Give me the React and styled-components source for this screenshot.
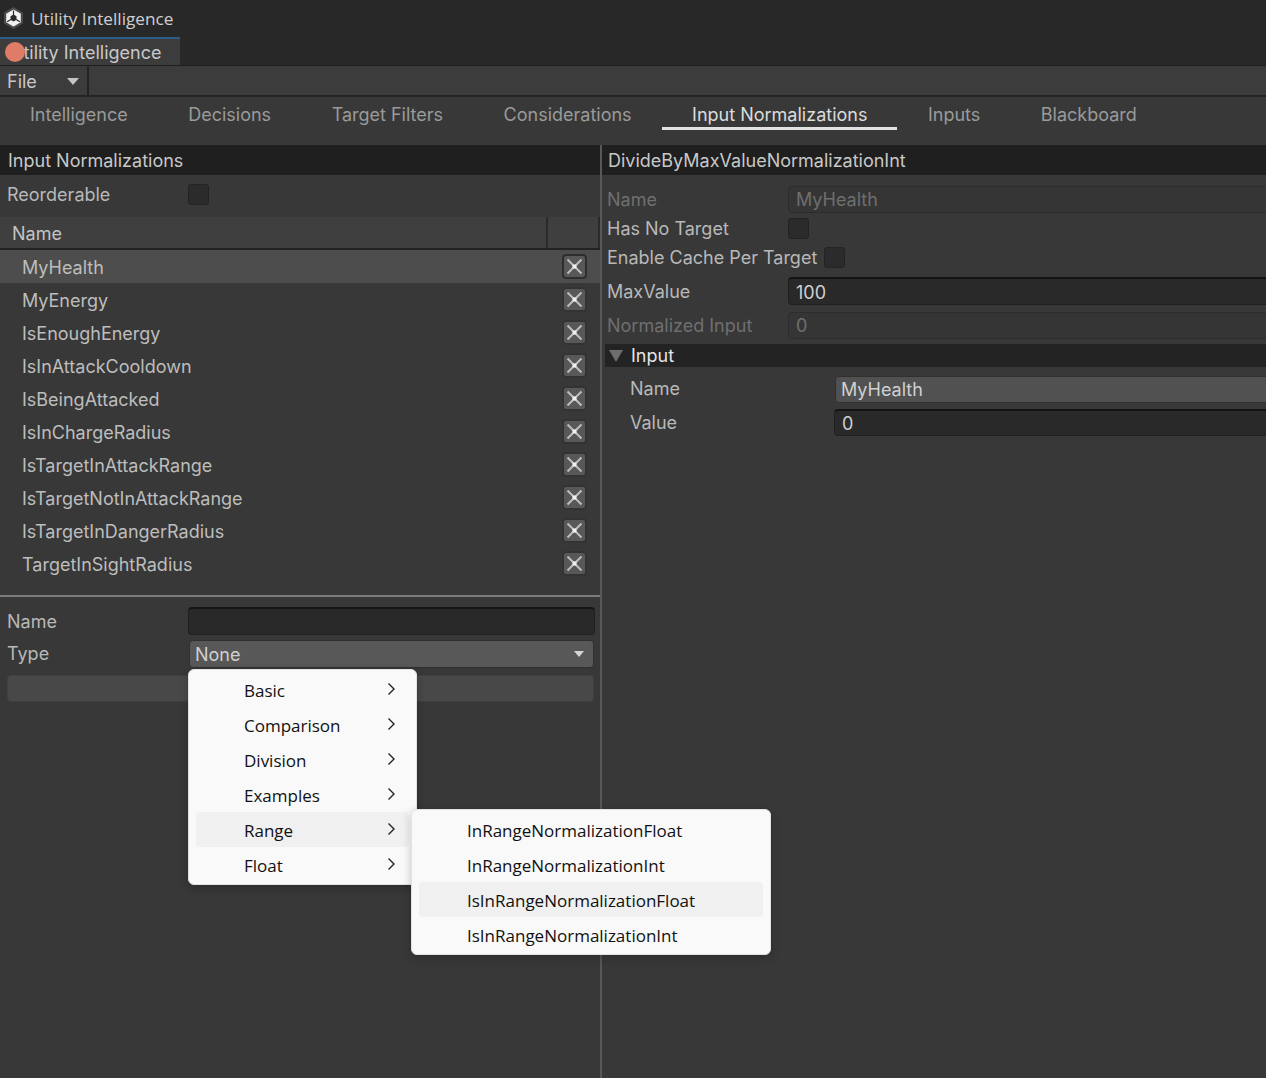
import React from 'react';
import styled, { createGlobalStyle } from 'styled-components';

const GlobalStyle = createGlobalStyle`
    html, body {
        margin: 0;
        padding: 0;
        background: #383838;
    }
    * {
        box-sizing: border-box;
    }
`;

const Page = styled.div`
    position: relative;
    width: 1266px;
    height: 1078px;
    overflow: hidden;
    display: flex;
    flex-direction: column;
    background: #383838;
    color: #c4c4c4;
    font-family: Inter, "Liberation Sans", sans-serif;
    font-size: 18px;
`;

const TitleBar = styled.div`
    height: 37px;
    flex: none;
    display: flex;
    align-items: center;
    gap: 7px;
    padding: 0 0 1px 3px;
    background: #282828;
    color: #cfcfcf;
    font-family: "Open Sans", "Noto Sans", sans-serif;
    font-size: 17.2px;
    svg {
        flex: none;
    }
`;

const DockRow = styled.div`
    height: 29px;
    flex: none;
    display: flex;
    background: #282828;
    border-bottom: 1px solid #1e1e1e;
`;

const DockTab = styled.div`
    width: 180px;
    height: 28px;
    padding-left: 10px;
    overflow: hidden;
    white-space: nowrap;
    background: #3c3c3c;
    border-top: 2px solid #2c5d87;
    color: #c8c8c8;
    font-size: 18px;
    line-height: 27px;
`;

const Dot = styled.span`
    position: absolute;
    left: 5px;
    top: 42px;
    width: 20px;
    height: 20px;
    border-radius: 50%;
    background: #df7c68;
`;

const Toolbar = styled.div`
    height: 31px;
    flex: none;
    display: flex;
    background: #3c3c3c;
    border-bottom: 2px solid #232323;
`;

const FileMenu = styled.div`
    width: 89px;
    display: flex;
    align-items: center;
    justify-content: space-between;
    padding: 2px 8px 0 7px;
    border-right: 2px solid #232323;
    color: #c8c8c8;
    &::after {
        content: '';
        border-left: 6px solid transparent;
        border-right: 6px solid transparent;
        border-top: 7px solid #c4c4c4;
    }
`;

const TabBar = styled.div`
    height: 48px;
    flex: none;
    display: flex;
    padding-top: 2px;
    background: #383838;
`;

const Tab = styled.div`
    height: 31px;
    padding: 5px 30px 0 30px;
    margin-right: 0.5px;
    white-space: nowrap;
    color: ${p => (p.$active ? '#dcdcdc' : '#9a9a9a')};
    border-bottom: 3px solid ${p => (p.$active ? '#e2e2e2' : 'transparent')};
`;

const Split = styled.div`
    flex: 1;
    display: flex;
    min-height: 0;
`;

const LeftPane = styled.div`
    width: 600px;
    flex: none;
    display: flex;
    flex-direction: column;
`;

const RightPane = styled.div`
    flex: 1;
    min-width: 0;
    border-left: 2px solid #585858;
    display: flex;
    flex-direction: column;
`;

const PaneTitle = styled.div`
    height: 30px;
    flex: none;
    padding-left: ${p => p.$indent}px;
    background: #1f1f1f;
    color: #c8c8c8;
    line-height: 31px;
    white-space: nowrap;
`;

const ReorderRow = styled.div`
    height: 42px;
    flex: none;
    display: flex;
    align-items: center;
    padding: 0 0 4px 7px;
`;

const Label = styled.span`
    width: ${p => p.$width || 181}px;
    flex: none;
    padding-bottom: ${p => p.$lift || 0}px;
    white-space: nowrap;
    color: ${p => (p.$dim ? '#6f6f6f' : '#b8b8b8')};
`;

const NestedLabel = styled(Label)`
    padding-left: 23px;
`;

const CheckBox = styled.span`
    width: 21px;
    height: 21px;
    flex: none;
    border-radius: 3px;
    background: #2b2b2b;
    border: 1px solid #232323;
`;

const TableHead = styled.div`
    height: 33px;
    flex: none;
    display: flex;
    background: #3f3f3f;
    border-bottom: 2px solid #232323;
`;

const HeadCell = styled.div`
    flex: ${p => (p.$grow ? 1 : 'none')};
    width: ${p => (p.$grow ? 'auto' : '52px')};
    padding-left: 12px;
    line-height: 33px;
    color: #c4c4c4;
    border-right: 2px solid #2a2a2a;
`;

const ListRow = styled.div`
    height: 33px;
    flex: none;
    display: flex;
    align-items: center;
    justify-content: space-between;
    padding: 0 13px 0 22px;
    background: ${p => (p.$selected ? '#4d4d4d' : 'transparent')};
    color: #bdbdbd;
`;

const RowName = styled.span`
    padding-top: 1px;
`;

const RemoveButton = styled.span`
    width: 25px;
    height: 25px;
    flex: none;
    display: flex;
    align-items: center;
    justify-content: center;
    border-radius: 4px;
    background: #585858;
    border: 2px solid ${p => (p.$selected ? '#2e2e2e' : '#333333')};
`;

const CreateForm = styled.div`
    margin-top: 15px;
    flex: 1;
    border-top: 2px solid #7a7a7a;
    padding: 10px 5px 0 7px;
    display: flex;
    flex-direction: column;
`;

const FormRow = styled.div`
    height: ${p => p.$h}px;
    flex: none;
    margin-bottom: ${p => p.$mb || 0}px;
    display: flex;
    align-items: center;
`;

const Field = styled.div`
    flex: 1;
    min-width: 0;
    height: ${p => p.$h || 28}px;
    margin-right: ${p => (p.$bleed ? '-10px' : 0)};
    padding-left: 7px;
    border-radius: 4px;
    line-height: ${p => (p.$h || 28) - 1}px;
    background: #292929;
    border: 1px solid #202020;
    border-top: 2px solid #141414;
    color: #d0d0d0;
`;

const MutedField = styled(Field)`
    background: #353535;
    border: 1px solid #2d2d2d;
    color: #6f6f6f;
`;

const NameField = styled(Field)`
    padding-left: 5px;
    background: #515151;
    border: 1px solid #303030;
    color: #d0d0d0;
`;

const SelectField = styled(Field)`
    display: flex;
    align-items: center;
    justify-content: space-between;
    margin: 0 1px;
    padding: 0 9px 0 5px;
    background: #585858;
    border: 1px solid #303030;
    &::after {
        content: '';
        border-left: 5.5px solid transparent;
        border-right: 5.5px solid transparent;
        border-top: 6px solid #d6d6d6;
    }
`;

const WideButton = styled.div`
    height: 27px;
    flex: none;
    margin-right: 1px;
    border-radius: 4px;
    background: #484848;
    border: 1px solid #404040;
`;

const Inspector = styled.div`
    padding: 10px 0 0 5px;
    display: flex;
    flex-direction: column;
`;

const InspectorRow = styled.div`
    height: ${p => p.$h}px;
    flex: none;
    margin-bottom: ${p => p.$mb || 0}px;
    display: flex;
    align-items: center;
`;

const Foldout = styled.div`
    height: 23px;
    margin: 5px 0 9px -2px;
    flex: none;
    display: flex;
    align-items: center;
    gap: 8px;
    padding-left: 4px;
    background: #232323;
    color: #e4e4e4;
    &::before {
        content: '';
        border-left: 7px solid transparent;
        border-right: 7px solid transparent;
        border-top: 12px solid #6e6e6e;
    }
`;

const Menu = styled.div`
    position: absolute;
    left: ${p => p.$left}px;
    top: ${p => p.$top}px;
    width: ${p => p.$width}px;
    padding: 2px 7px;
    border-radius: 6px;
    background: #f9f9f9;
    border: 1px solid #e2e2e2;
    box-shadow: 0 3px 10px rgba(0, 0, 0, 0.22);
    color: #111;
    font-family: "Open Sans", "Noto Sans", sans-serif;
    font-size: 17px;
    z-index: ${p => p.$z || 1};
`;

const MenuItem = styled.div`
    height: 35px;
    display: flex;
    align-items: center;
    justify-content: space-between;
    padding: 2px 13px 0 48px;
    border-radius: 4px;
    white-space: nowrap;
    background: ${p => (p.$hover ? '#f0f0f0' : 'transparent')};
`;

const Close = () => (
    <svg width="17" height="17" viewBox="0 0 17 17">
        <path d="M1.5 1.5 L15.5 15.5 M15.5 1.5 L1.5 15.5" stroke="#bdbdbd" strokeWidth="2" fill="none" />
        <rect x="6.5" y="6.5" width="4" height="4" fill="#f0f0f0" />
    </svg>
);

const Chevron = () => (
    <svg width="9" height="14" viewBox="0 0 9 14" style={{ marginTop: -4 }}>
        <path d="M1.5 1.5 L7 7 L1.5 12.5" stroke="#222" strokeWidth="1.4" fill="none" />
    </svg>
);

const UnityLogo = () => (
    <svg width="21" height="22" viewBox="0 0 21 22">
        <path d="M10.5 0 L20 5.5 L20 16.5 L10.5 22 L1 16.5 L1 5.5 Z" fill="#4b4b4b" />
        <path d="M10.5 2.5 L17.8 6.7 L17.8 15.3 L10.5 19.5 L3.2 15.3 L3.2 6.7 Z" fill="#f2f2f2" />
        <path d="M10.5 7.5 L13.5 9.2 L13.5 12.8 L10.5 14.5 L7.5 12.8 L7.5 9.2 Z" fill="#2a2a2a" />
        <path d="M10.5 8 V3.5 M13.2 12.6 L16.8 14.7 M7.8 12.6 L4.2 14.7" stroke="#2a2a2a" strokeWidth="1.2" />
    </svg>
);

const tabs = ['Intelligence', 'Decisions', 'Target Filters', 'Considerations', 'Input Normalizations', 'Inputs', 'Blackboard'];

const normalizations = [
    'MyHealth',
    'MyEnergy',
    'IsEnoughEnergy',
    'IsInAttackCooldown',
    'IsBeingAttacked',
    'IsInChargeRadius',
    'IsTargetInAttackRange',
    'IsTargetNotInAttackRange',
    'IsTargetInDangerRadius',
    'TargetInSightRadius'
];

const categories = ['Basic', 'Comparison', 'Division', 'Examples', 'Range', 'Float'];

const rangeTypes = [
    'InRangeNormalizationFloat',
    'InRangeNormalizationInt',
    'IsInRangeNormalizationFloat',
    'IsInRangeNormalizationInt'
];

export default function App() {
    return (
        <Page>
            <GlobalStyle />
            <TitleBar>
                <UnityLogo />
                Utility Intelligence
            </TitleBar>
            <DockRow>
                <DockTab>Utility Intelligence</DockTab>
            </DockRow>
            <Dot />
            <Toolbar>
                <FileMenu>File</FileMenu>
            </Toolbar>
            <TabBar>
                {tabs.map(t => (
                    <Tab key={t} $active={t === 'Input Normalizations'}>{t}</Tab>
                ))}
            </TabBar>
            <Split>
                <LeftPane>
                    <PaneTitle $indent={8}>Input Normalizations</PaneTitle>
                    <ReorderRow>
                        <Label>Reorderable</Label>
                        <CheckBox />
                    </ReorderRow>
                    <TableHead>
                        <HeadCell $grow>Name</HeadCell>
                        <HeadCell />
                    </TableHead>
                    {normalizations.map((n, i) => (
                        <ListRow key={n} $selected={i === 0}>
                            <RowName>{n}</RowName>
                            <RemoveButton $selected={i === 0}><Close /></RemoveButton>
                        </ListRow>
                    ))}
                    <CreateForm>
                        <FormRow $h={28} $mb={5}>
                            <Label>Name</Label>
                            <Field />
                        </FormRow>
                        <FormRow $h={28} $mb={7}>
                            <Label $lift={2}>Type</Label>
                            <SelectField>None</SelectField>
                        </FormRow>
                        <WideButton />
                    </CreateForm>
                </LeftPane>
                <RightPane>
                    <PaneTitle $indent={6}>DivideByMaxValueNormalizationInt</PaneTitle>
                    <Inspector>
                        <InspectorRow $h={28} $mb={1}>
                            <Label $dim>Name</Label>
                            <MutedField $h={27} $bleed>MyHealth</MutedField>
                        </InspectorRow>
                        <InspectorRow $h={29}>
                            <Label>Has No Target</Label>
                            <CheckBox />
                        </InspectorRow>
                        <InspectorRow $h={29} $mb={5}>
                            <Label $width={217}>Enable Cache Per Target</Label>
                            <CheckBox />
                        </InspectorRow>
                        <InspectorRow $h={28} $mb={6}>
                            <Label>MaxValue</Label>
                            <Field $bleed>100</Field>
                        </InspectorRow>
                        <InspectorRow $h={28}>
                            <Label $dim>Normalized Input</Label>
                            <MutedField $h={27} $bleed>0</MutedField>
                        </InspectorRow>
                        <Foldout>Input</Foldout>
                        <InspectorRow $h={27} $mb={6}>
                            <NestedLabel $width={228} $lift={2}>Name</NestedLabel>
                            <NameField $h={27} $bleed>MyHealth</NameField>
                        </InspectorRow>
                        <InspectorRow $h={27}>
                            <NestedLabel $width={227}>Value</NestedLabel>
                            <Field $h={27} $bleed>0</Field>
                        </InspectorRow>
                    </Inspector>
                </RightPane>
            </Split>
            <Menu $left={188} $top={669} $width={229}>
                {categories.map(c => (
                    <MenuItem key={c} $hover={c === 'Range'}>
                        {c}
                        <Chevron />
                    </MenuItem>
                ))}
            </Menu>
            <Menu $left={411} $top={809} $width={360} $z={2}>
                {rangeTypes.map((r, i) => (
                    <MenuItem key={r} $hover={i === 2}>{r}</MenuItem>
                ))}
            </Menu>
        </Page>
    );
}
